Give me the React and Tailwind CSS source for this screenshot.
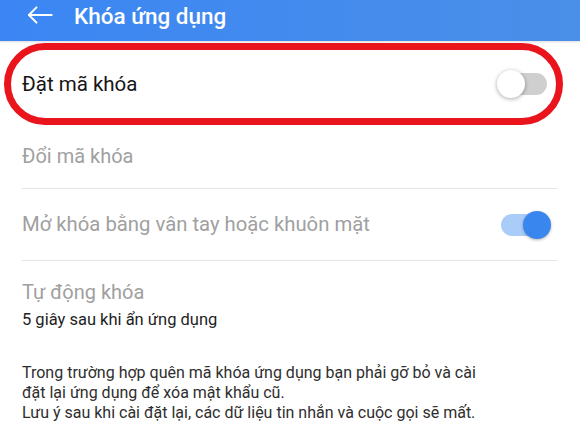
import React from 'react';

function Toggle({ on }) {
  return (
    <div className="relative w-[52px] h-[30px] flex items-center shrink-0">
      <div className={`w-[48px] h-[22px] ml-[2px] rounded-full ${on ? 'bg-[#a9cdf8]' : 'bg-[#cfcfcf]'}`} />
      <div
        className={`absolute top-[1px] w-[28px] h-[28px] rounded-full ${
          on ? 'right-0 bg-[#3a86ef] shadow-[0_1px_3px_rgba(0,0,0,0.3)]' : 'left-0 bg-white shadow-[0_1px_4px_rgba(0,0,0,0.35)]'
        }`}
      />
    </div>
  );
}

export default function App() {
  return (
    <div className="w-[580px] h-[439px] bg-white overflow-hidden" style={{ fontFamily: 'Roboto, "Noto Sans", sans-serif' }}>
      {/* Header */}
      <div className="h-[41px] bg-gradient-to-r from-[#3b86f4] to-[#4a8fe8] flex items-start pt-[1px] pl-[26px] gap-[20px] shadow-[0_1px_2px_rgba(0,0,0,0.15)]">
        <svg width="28" height="28" viewBox="0 0 24 24" fill="none" stroke="white" strokeWidth="1.7" strokeLinecap="round" strokeLinejoin="round">
          <path d="M22 12H2.5" />
          <path d="M9 5.5l-6.5 6.5 6.5 6.5" />
        </svg>
        <span className="text-white text-[22.5px] leading-[30px] font-medium">Khóa ứng dụng</span>
      </div>

      {/* Highlighted row */}
      <div className="mt-[2px] mx-[4px] w-[559px] h-[82px] border-[7px] border-[#ea141c] rounded-full flex items-center justify-between pl-[11px] pr-[7px]">
        <span className="text-[20.5px] text-[#161616]">Đặt mã khóa</span>
        <Toggle on={false} />
      </div>

      <div className="mx-[22px] w-[535px]">
        <div className="h-[64px] flex items-center border-b border-[#e6e6e6] pb-[2px]">
          <span className="text-[20px] text-[#a0a0a0]">Đổi mã khóa</span>
        </div>
        <div className="h-[72px] flex items-center justify-between border-b border-[#e6e6e6] pr-[6px]">
          <span className="text-[20.3px] text-[#a0a0a0]">Mở khóa bằng vân tay hoặc khuôn mặt</span>
          <Toggle on />
        </div>
        <div className="pt-[17px]">
          <div className="text-[20px] leading-[28px] text-[#a0a0a0]">Tự động khóa</div>
          <div className="text-[16.5px] leading-[24px] text-[#1e1e1e] mt-[2px]">5 giây sau khi ẩn ứng dụng</div>
        </div>
        <p className="mt-[31px] text-[16px] leading-[20px] text-[#2e2e2e]">
          Trong trường hợp quên mã khóa ứng dụng bạn phải gỡ bỏ và cài
          <br />
          đặt lại ứng dụng để xóa mật khẩu cũ.
          <br />
          Lưu ý sau khi cài đặt lại, các dữ liệu tin nhắn và cuộc gọi sẽ mất.
        </p>
      </div>
    </div>
  );
}
